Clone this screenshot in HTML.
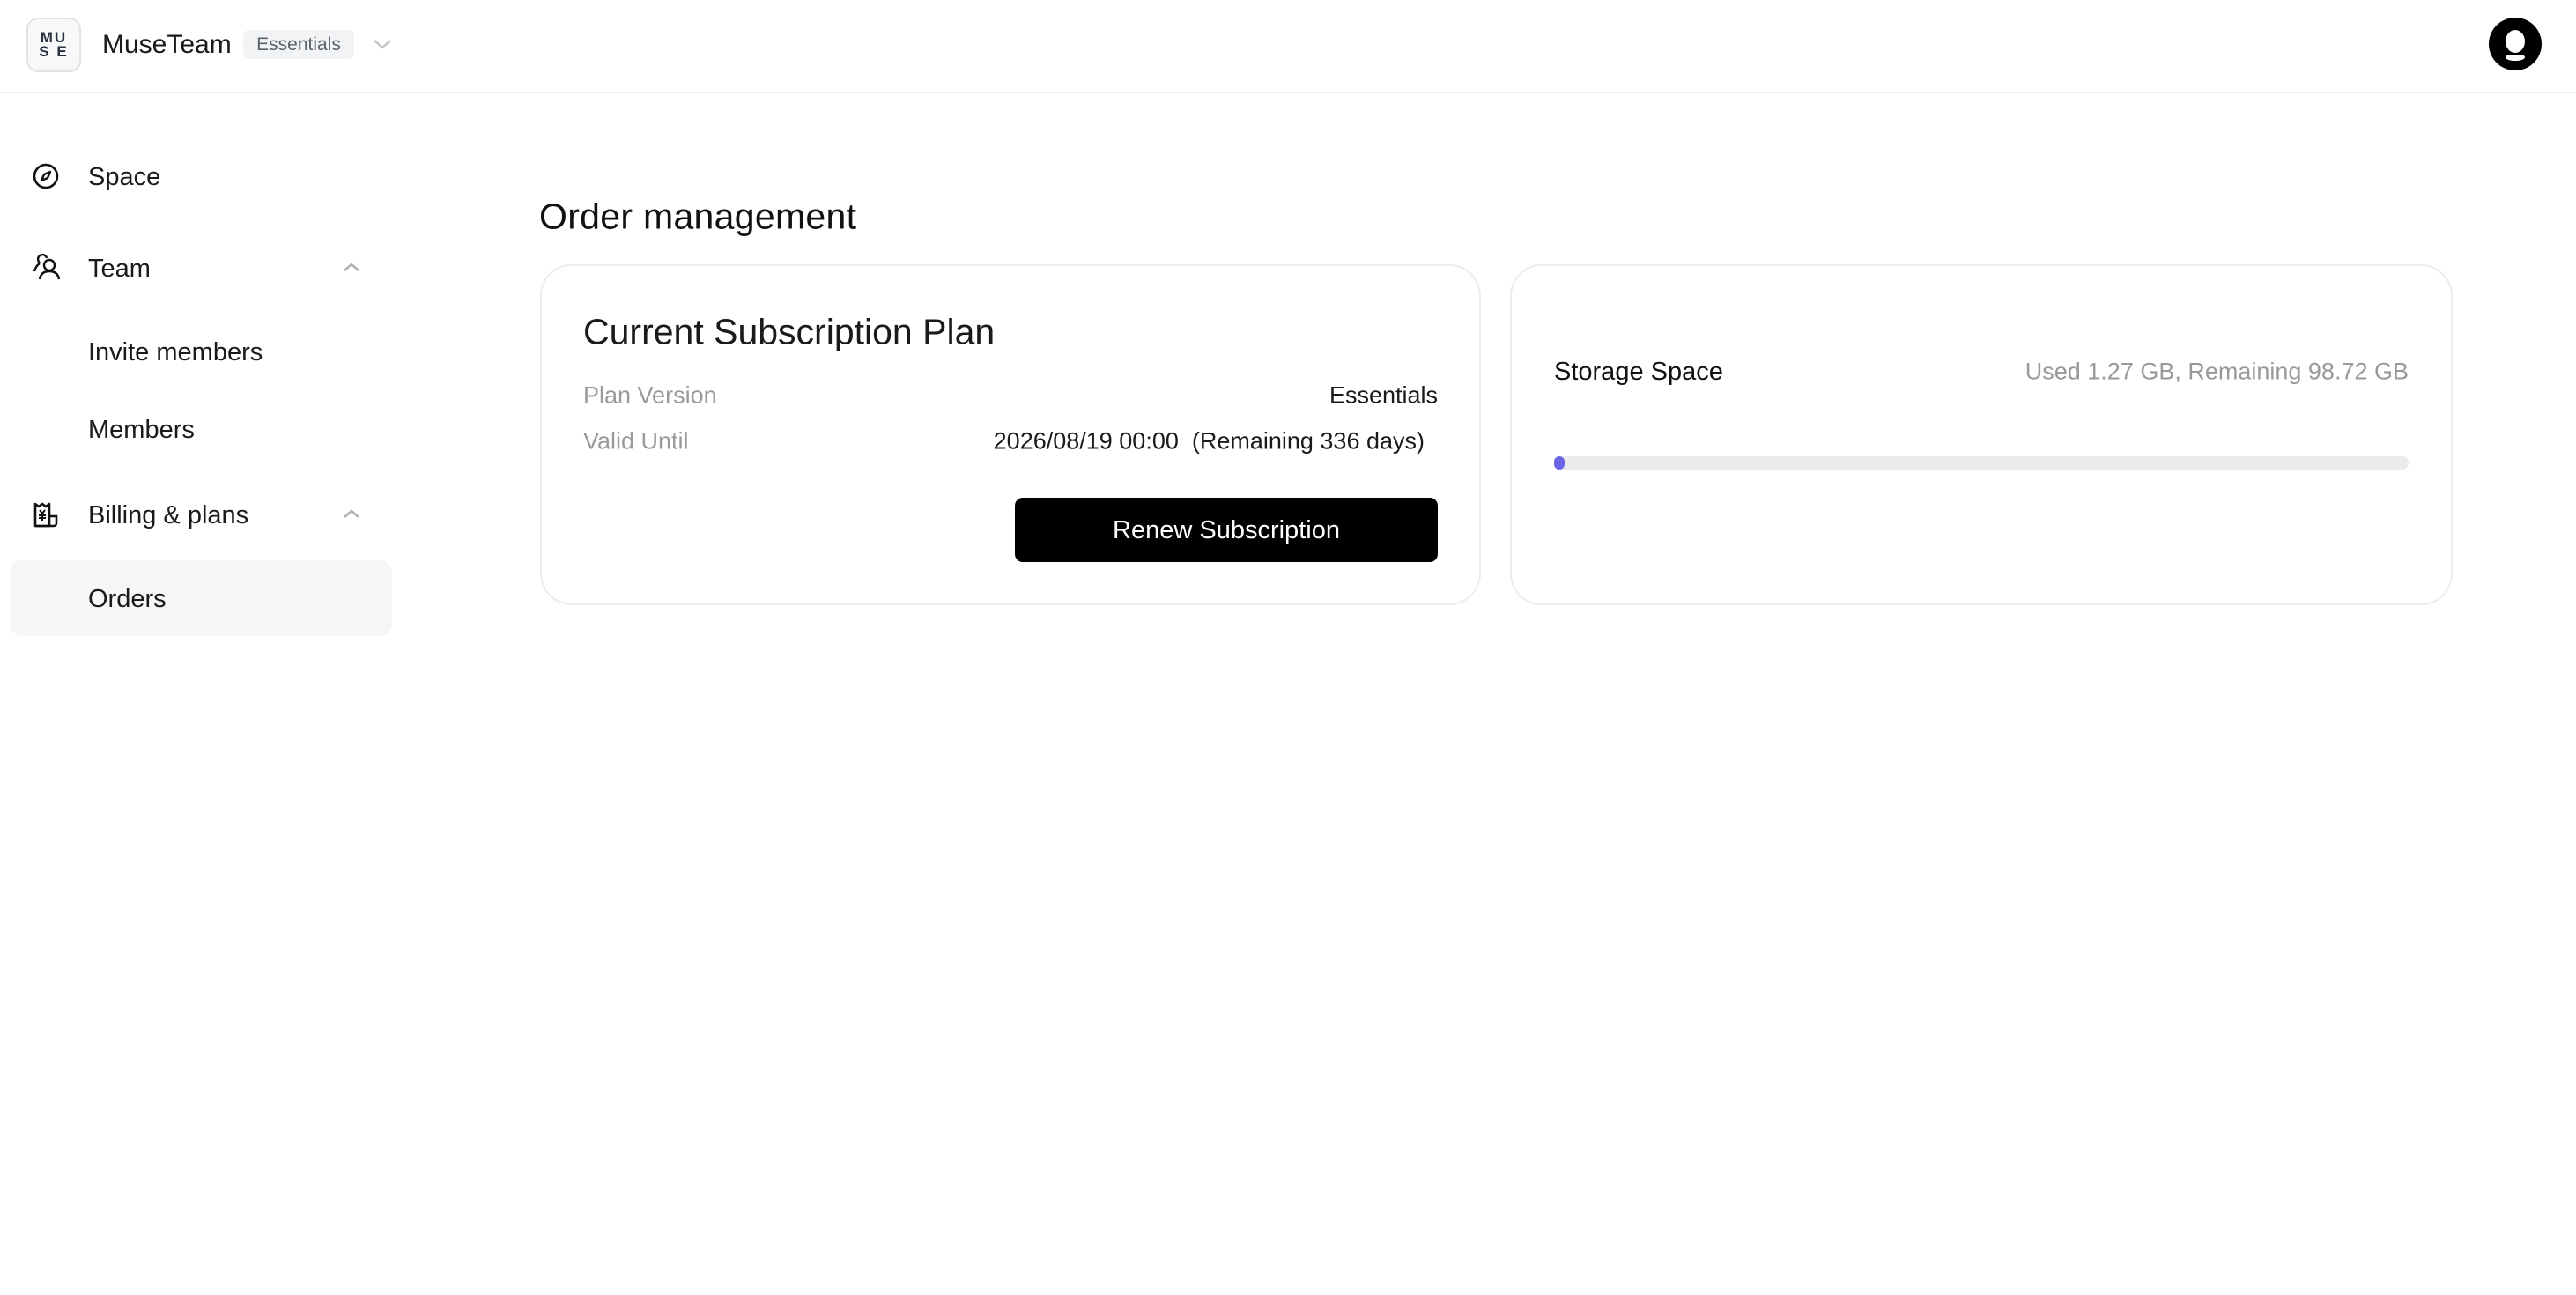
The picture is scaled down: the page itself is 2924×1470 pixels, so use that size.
<!DOCTYPE html>
<html><head><meta charset="utf-8"><style>
*{margin:0;padding:0;box-sizing:border-box}
body{width:2924px;height:1470px;background:#fff;font-family:"Liberation Sans",sans-serif;color:#111;position:relative;overflow:hidden}
.a{position:absolute;white-space:nowrap}
.hdr{position:absolute;left:0;top:0;width:2924px;height:106px;border-bottom:2px solid #ececec}
.logo{left:30px;top:20px;width:62px;height:62px;border:2px solid #e3e3e3;border-radius:13px;background:#f7f8fa;font-weight:700;font-size:17px;line-height:16px;color:#2a2f3d;text-align:center;padding-top:13px;letter-spacing:2px}
.nav{font-size:29px;color:#1a1a1a;transform:translateY(-46%)}
.card{position:absolute;border:2px solid #ececec;border-radius:36px;background:#fff}
.lbl{font-size:27px;color:#9a9a9a;transform:translateY(-46%)}
.val{font-size:27px;color:#1a1a1a;transform:translateY(-46%)}
</style></head><body>
<div class="hdr"></div>
<div class="a logo">MU<br>S E</div>
<div class="a" style="left:116px;top:34px;font-size:30px;color:#1a1a1a">MuseTeam</div>
<div class="a" style="left:276px;top:34px;width:126px;height:33px;border-radius:7px;background:#f2f3f5;color:#5a606c;font-size:21px;line-height:34px;text-align:center">Essentials</div>
<svg class="a" style="left:422px;top:42px" width="24" height="16" viewBox="0 0 24 16"><path d="M3 4l9 8 9-8" fill="none" stroke="#c4c4c4" stroke-width="2.5"/></svg>
<svg class="a" style="left:2825px;top:20px" width="60" height="60" viewBox="0 0 60 60"><circle cx="30" cy="30" r="30" fill="#000"/><ellipse cx="30" cy="27" rx="11" ry="13" fill="#fff"/><ellipse cx="30" cy="45" rx="11" ry="4" fill="#fff"/><rect x="18" y="40" width="24" height="2" fill="#000"/></svg>

<svg class="a" style="left:36px;top:184px" width="32" height="32" viewBox="0 0 32 32"><circle cx="16" cy="16" r="13" fill="none" stroke="#111" stroke-width="2.6"/><path d="M21 11l-3 7-7 3 3-7z" fill="none" stroke="#111" stroke-width="2.4" stroke-linejoin="round"/></svg>
<div class="a nav" style="left:100px;top:200px">Space</div>
<svg class="a" style="left:36px;top:286px" width="34" height="34" viewBox="0 0 34 34"><path d="M9 12a5 5 0 1 1 8-5" fill="none" stroke="#111" stroke-width="2.4"/><path d="M3 22c1-4 3-7 6-9" fill="none" stroke="#111" stroke-width="2.4"/><circle cx="20" cy="15" r="6" fill="none" stroke="#111" stroke-width="2.4"/><path d="M9 31c1-6 5-9 11-9s10 3 11 9" fill="none" stroke="#111" stroke-width="2.4"/></svg>
<div class="a nav" style="left:100px;top:304px">Team</div>
<svg class="a" style="left:388px;top:296px" width="22" height="14" viewBox="0 0 22 14"><path d="M3 11l8-7 8 7" fill="none" stroke="#b0b0b0" stroke-width="2.5"/></svg>
<div class="a nav" style="left:100px;top:399px">Invite members</div>
<div class="a nav" style="left:100px;top:487px">Members</div>
<svg class="a" style="left:36px;top:568px" width="34" height="32" viewBox="0 0 34 32"><path d="M4 29V4l4 3 4-3 4 3 4-3v25z" fill="none" stroke="#111" stroke-width="2.6" stroke-linejoin="round"/><path d="M20 18h8v8a3 3 0 0 1-3 3H4" fill="none" stroke="#111" stroke-width="2.6"/><path d="M9 11l3 4 3-4M12 15v8M8 17h8M8 20h8" fill="none" stroke="#111" stroke-width="2"/></svg>
<div class="a nav" style="left:100px;top:584px">Billing &amp; plans</div>
<svg class="a" style="left:388px;top:576px" width="22" height="14" viewBox="0 0 22 14"><path d="M3 11l8-7 8 7" fill="none" stroke="#b0b0b0" stroke-width="2.5"/></svg>
<div class="a" style="left:11px;top:636px;width:434px;height:86px;border-radius:14px;background:#f5f6f8"></div>
<div class="a nav" style="left:100px;top:679px">Orders</div>

<div class="a" style="left:612px;top:244px;font-size:41px;transform:translateY(-46%);color:#111;letter-spacing:0.3px">Order management</div>

<div class="card" style="left:613px;top:300px;width:1068px;height:387px"></div>
<div class="a" style="left:662px;top:375px;font-size:41px;transform:translateY(-46%);color:#1a1a1a">Current Subscription Plan</div>
<div class="a lbl" style="left:662px;top:448px">Plan Version</div>
<div class="a val" style="right:1292px;top:448px">Essentials</div>
<div class="a lbl" style="left:662px;top:500px">Valid Until</div>
<div class="a val" style="right:1307px;top:500px">2026/08/19 00:00 &nbsp;(Remaining 336 days)</div>
<div class="a" style="left:1152px;top:565px;width:480px;height:73px;background:#000;border-radius:9px;color:#fff;font-size:29px;line-height:75px;text-align:center">Renew Subscription</div>

<div class="card" style="left:1714px;top:300px;width:1070px;height:387px"></div>
<div class="a" style="left:1764px;top:421px;font-size:29px;transform:translateY(-46%);color:#111">Storage Space</div>
<div class="a" style="right:190px;top:421px;font-size:27px;transform:translateY(-46%);color:#999">Used 1.27 GB, Remaining 98.72 GB</div>
<div class="a" style="left:1764px;top:518px;width:970px;height:15px;border-radius:8px;background:#ebebed"></div>
<div class="a" style="left:1764px;top:518px;width:12px;height:15px;border-radius:8px;background:#6b63e6"></div>
</body></html>
